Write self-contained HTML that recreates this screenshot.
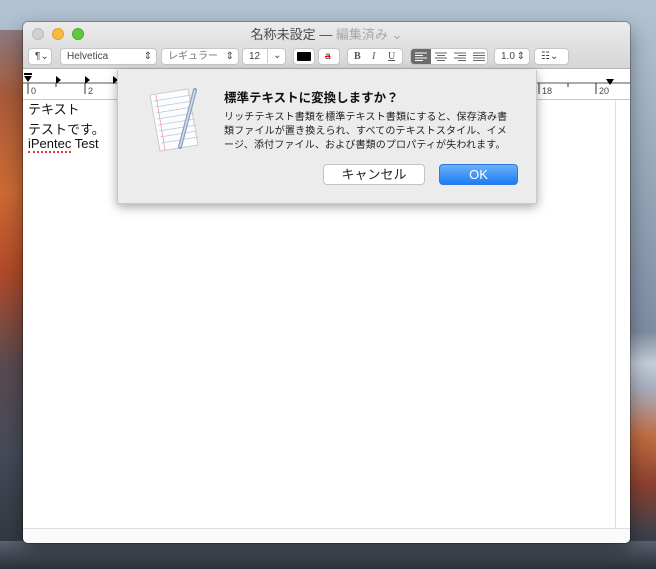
<!DOCTYPE html>
<html><head><meta charset="utf-8"><style>
*{margin:0;padding:0;box-sizing:border-box}
body{width:656px;height:569px;overflow:hidden;position:relative;font-family:"Liberation Sans","Noto Sans CJK JP",sans-serif;
background:linear-gradient(180deg,#b4c3d3 0%,#98a8bb 30%,#7d8ba0 60%,#55606f 85%,#3a404c 100%)}
.bgl{position:absolute;left:0;top:30px;width:26px;height:539px;background:linear-gradient(180deg,#8a7a80 0%,#a85a3a 12%,#cc6a34 30%,#b04a28 45%,#5a4a50 62%,#454b58 78%,#2e323c 100%)}
.bgr{position:absolute;right:0;top:330px;width:28px;height:239px;background:linear-gradient(180deg,#7c8a9e 0%,#c4ccd8 14%,#a8b0c0 24%,#c06a40 45%,#8a4030 65%,#3e424c 85%,#2c3038 100%)}
.bgb{position:absolute;left:0;bottom:0;width:656px;height:28px;background:linear-gradient(180deg,#5a6270,#2c3038)}
.win{position:absolute;left:23px;top:22px;width:607px;height:521px;background:#fff;border-radius:5px;overflow:hidden;box-shadow:0 0 0 1px rgba(0,0,0,.25),0 8px 20px rgba(0,0,0,.4)}
.top{position:absolute;left:0;top:0;width:607px;height:47px;background:linear-gradient(#ebebeb,#d6d6d6);border-bottom:1px solid #b4b4b4}
.dot{position:absolute;top:6px;width:12px;height:12px;border-radius:50%}
.title{position:absolute;top:2px;left:0;width:607px;text-align:center;font-size:13px;color:#4a4a4a}
.title span{color:#a8a8a8}
.tb{position:absolute;top:26px;height:17px;background:#fff;border:1px solid #c6c6c6;border-radius:4px;font-size:10px;color:#444;line-height:15px;padding-left:6px}
.ruler{position:absolute;left:0;top:47px;width:607px;height:31px;background:#fff;border-bottom:1px solid #c8c8c8}
.txt{position:absolute;left:5px;font-size:13px;color:#111}
.dlg{position:absolute;left:117px;top:70px;width:420px;height:134px;background:#ececec;box-shadow:0 3px 10px rgba(0,0,0,.35);border:1px solid #c8c8c8;border-top:none}
.btn{position:absolute;top:94px;height:21px;border-radius:4px;font-size:13px;text-align:center;line-height:20px}
</style></head><body>
<div class="bgl"></div><div class="bgr"></div><div class="bgb"></div>
<div class="win">
<div class="top">
<div class="dot" style="left:9px;background:#d0d0d0;border:1px solid #bbb"></div>
<div class="dot" style="left:29px;background:#f5bd3e;border:1px solid #dea236"></div>
<div class="dot" style="left:49px;background:#5fc83e;border:1px solid #4ea935"></div>
<div class="title">名称未設定 — <span>編集済み ⌄</span></div>
<div class="tb" style="left:5px;width:24px">¶⌄</div>
<div class="tb" style="left:37px;width:97px">Helvetica<span style="position:absolute;right:4px">⇕</span></div>
<div class="tb" style="left:138px;width:78px;color:#777">レギュラー<span style="position:absolute;right:4px;color:#444">⇕</span></div>
<div class="tb" style="left:219px;width:44px">12<span style="position:absolute;left:24px;top:-1px;height:15px;border-left:1px solid #ccc;padding-left:5px">⌄</span></div>
<div class="tb" style="left:270px;width:22px;padding:3px"><div style="background:#000;height:9px;border-radius:1px"></div></div>
<div class="tb" style="left:295px;width:22px;color:#333;padding-left:6px"><span style="text-decoration:line-through;text-decoration-color:red">a</span></div>
<div class="tb" style="left:324px;width:56px;font-family:'Liberation Serif',serif;color:#555;padding:0">
<span style="position:absolute;left:6px"><b>B</b></span><span style="position:absolute;left:24px"><i>I</i></span><span style="position:absolute;left:40px"><u>U</u></span></div>
<div class="tb" style="left:387px;width:78px;padding:0;overflow:hidden">
<svg width="78" height="15" style="position:absolute;left:0;top:0">
<rect x="0" y="0" width="20" height="15" fill="#6c6c6c"/>
<g stroke="#fff" stroke-width="1"><line x1="4" y1="4" x2="16" y2="4"/><line x1="4" y1="6.5" x2="12" y2="6.5"/><line x1="4" y1="9" x2="16" y2="9"/><line x1="4" y1="11.5" x2="12" y2="11.5"/></g>
<g stroke="#666" stroke-width="1"><line x1="24" y1="4" x2="36" y2="4"/><line x1="26" y1="6.5" x2="34" y2="6.5"/><line x1="24" y1="9" x2="36" y2="9"/><line x1="26" y1="11.5" x2="34" y2="11.5"/>
<line x1="43" y1="4" x2="55" y2="4"/><line x1="47" y1="6.5" x2="55" y2="6.5"/><line x1="43" y1="9" x2="55" y2="9"/><line x1="47" y1="11.5" x2="55" y2="11.5"/>
<line x1="62" y1="4" x2="74" y2="4"/><line x1="62" y1="6.5" x2="74" y2="6.5"/><line x1="62" y1="9" x2="74" y2="9"/><line x1="62" y1="11.5" x2="74" y2="11.5"/></g>
</svg></div>
<div class="tb" style="left:471px;width:36px">1.0 <span style="position:absolute;right:4px">⇕</span></div>
<div class="tb" style="left:511px;width:35px">☷⌄</div>
</div>
<div class="ruler">
<svg width="607" height="31" style="position:absolute;left:0;top:0">
<line x1="0" y1="14" x2="607" y2="14" stroke="#555"/>
<polygon points="1,7 9,7 5,13" fill="#000"/><line x1="1" y1="5" x2="9" y2="5" stroke="#000" stroke-width="2"/>
<polygon points="33,7 38,11 33,15" fill="#000"/><polygon points="62,7 67,11 62,15" fill="#000"/><polygon points="90,7 95,11 90,15" fill="#000"/>
<line x1="5" y1="14" x2="5" y2="25" stroke="#333"/><line x1="62" y1="14" x2="62" y2="25" stroke="#333"/>
<line x1="516" y1="14" x2="516" y2="25" stroke="#333"/><line x1="573" y1="14" x2="573" y2="25" stroke="#333"/>
<line x1="545" y1="14" x2="545" y2="18" stroke="#333"/><line x1="33" y1="14" x2="33" y2="18" stroke="#333"/>
<polygon points="583,10 591,10 587,16" fill="#000"/>
<text x="8" y="25" font-size="9" fill="#444">0</text><text x="65" y="25" font-size="9" fill="#444">2</text>
<text x="519" y="25" font-size="9" fill="#444">18</text><text x="576" y="25" font-size="9" fill="#444">20</text>
</svg></div>
<div class="txt" style="top:77px">テキスト</div>
<div class="txt" style="top:97px">テストです。</div>
<div class="txt" style="top:114px;font-size:13px"><span style="border-bottom:2px dotted #e33">iPentec</span> Test</div>
<div style="position:absolute;left:592px;top:78px;width:1px;height:428px;background:#e0e0e0"></div>
<div style="position:absolute;left:0;top:506px;width:607px;height:15px;background:#fafafa;border-top:1px solid #ddd"></div>
</div>
<div class="dlg">
<svg width="60" height="70" style="position:absolute;left:28px;top:15px">
<polygon points="4,10 42,4 52,60 14,66" fill="#fdfdfd" stroke="#ccc"/>
<g stroke="#b8c8de" stroke-width=".8"><line x1="8" y1="16" x2="45" y2="10"/><line x1="9" y1="22" x2="46" y2="16"/><line x1="10" y1="28" x2="47" y2="22"/><line x1="11" y1="34" x2="48" y2="28"/><line x1="12" y1="40" x2="49" y2="34"/><line x1="13" y1="46" x2="50" y2="40"/><line x1="14" y1="52" x2="51" y2="46"/><line x1="15" y1="58" x2="52" y2="52"/></g>
<line x1="10" y1="10" x2="19" y2="65" stroke="#f0a0a0" stroke-width=".8"/>
<line x1="49" y1="5" x2="34" y2="62" stroke="#8aa0bc" stroke-width="4" stroke-linecap="round"/>
<line x1="49" y1="5" x2="34" y2="62" stroke="#d4dfec" stroke-width="1.5"/>
</svg>
<div style="position:absolute;left:106px;top:17px;font-size:12.5px;font-weight:bold;color:#111">標準テキストに変換しますか？</div>
<div style="position:absolute;left:106px;top:41px;width:300px;font-size:10px;letter-spacing:0.15px;line-height:14px;color:#222">リッチテキスト書類を標準テキスト書類にすると、保存済み書<br>類ファイルが置き換えられ、すべてのテキストスタイル、イメ<br>ージ、添付ファイル、および書類のプロパティが失われます。</div>
<div class="btn" style="left:205px;width:102px;background:#fff;border:1px solid #c4c4c4;color:#222">キャンセル</div>
<div class="btn" style="left:321px;width:79px;background:linear-gradient(#6bb0fa,#1c7ef3);color:#fff;border:1px solid #2a7ae0">OK</div>
</div>
</body></html>
